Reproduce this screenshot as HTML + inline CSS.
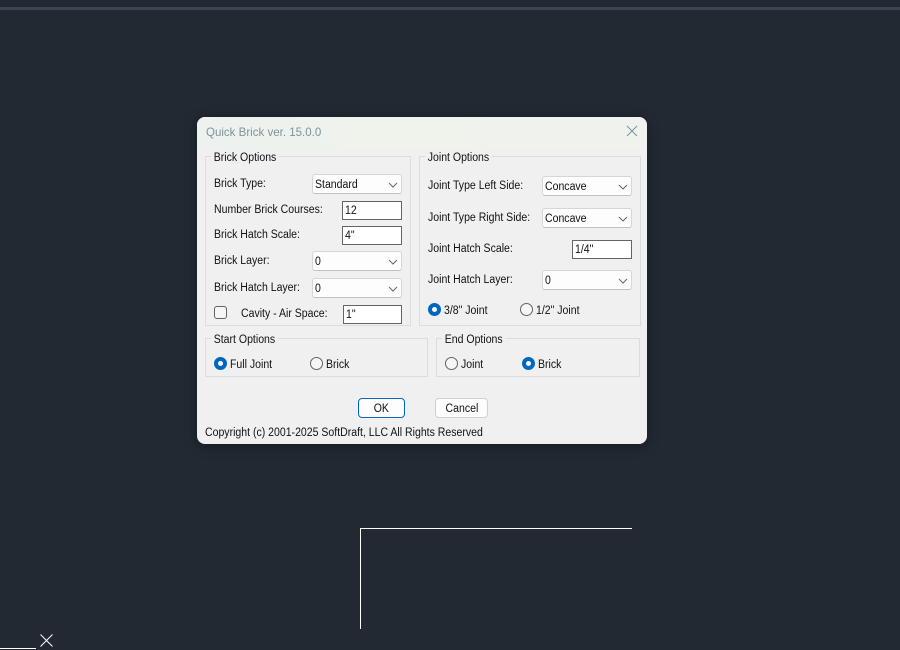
<!DOCTYPE html>
<html><head><meta charset="utf-8"><style>
html,body{margin:0;padding:0;width:900px;height:650px;overflow:hidden;background:#222933}
*{box-sizing:border-box}
body{position:relative;font-family:"Liberation Sans",sans-serif;font-size:12px;color:#111}
.a{position:absolute}
.t{position:absolute;white-space:nowrap;line-height:14px;height:14px;font-size:11.5px;color:#111;margin-top:1px;transform:scaleX(.915);transform-origin:0 0}
.g{position:absolute;border:1px solid #dcdcdc}
.lg{position:absolute;white-space:nowrap;background:#f0f0f0;padding:0 3px;margin-left:0;margin-top:1px;line-height:14px;font-size:11.5px;color:#111;transform:scaleX(.915);transform-origin:0 0}
.c{position:absolute;width:90px;height:20px;background:#fdfdfd;border:1px solid #d6d6d6;border-bottom-color:#c0c0c0;border-radius:3px;font-size:11.5px;line-height:21px;padding-left:2px;color:#111;white-space:nowrap}
.c svg{position:absolute;right:2px;top:4px}
.s{display:inline-block;transform:scaleX(.915);transform-origin:0 50%}
.i{position:absolute;height:19px;background:#fff;border:1px solid #646464;font-size:11.5px;line-height:19px;padding-left:2px;color:#111}
.r{position:absolute;width:13px;height:13px;border-radius:50%;border:1px solid #5f6468;background:#f6f6f6}
.r.on{border:4px solid #0067c0;background:#fff}
.b{position:absolute;height:20px;border-radius:4px;background:#fdfdfd;text-align:center;font-size:11.5px;line-height:20px;color:#111}
.b .s{transform-origin:50% 50%}
</style></head><body>
<div class="a" style="left:0;top:7px;width:900px;height:3px;background:#3c4353"></div>

<div class="a" style="left:360px;top:528px;width:272px;height:1px;background:#fff"></div>
<div class="a" style="left:360px;top:528px;width:1px;height:101px;background:#fff"></div>
<div class="a" style="left:0;top:648px;width:36px;height:1px;background:#fff"></div>
<svg class="a" style="left:40px;top:634px" width="13" height="13"><path d="M0.5 0.5L12.5 12.5M12.5 0.5L0.5 12.5" stroke="#fff" stroke-width="1" fill="none"/></svg>

<div class="a" style="left:197px;top:117px;width:450px;height:327px;background:#f0f0f0;border-radius:8px;box-shadow:0 2px 12px rgba(0,0,0,.35);overflow:hidden">
  <div class="a" style="left:0;top:0;width:450px;height:32px;background:linear-gradient(90deg,#eef2ee,#eff3ec 45%,#f0f2ee)"></div>
</div>
<div class="t" style="left:206px;top:124px;color:#7f929c;font-size:12px;transform:scaleX(.96)">Quick Brick ver. 15.0.0</div>
<svg class="a" style="left:626px;top:125px" width="12" height="12"><path d="M1 1L11 11M11 1L1 11" stroke="#7a93a3" stroke-width="1" fill="none"/></svg>

<div class="g" style="left:205px;top:156px;width:206px;height:170px"></div>
<div class="lg" style="left:211px;top:150px">Brick Options</div>
<div class="g" style="left:419px;top:156px;width:222px;height:170px"></div>
<div class="lg" style="left:425px;top:150px">Joint Options</div>
<div class="g" style="left:205px;top:338px;width:223px;height:39px"></div>
<div class="lg" style="left:211px;top:332px">Start Options</div>
<div class="g" style="left:436px;top:338px;width:204px;height:39px"></div>
<div class="lg" style="left:442px;top:332px">End Options</div>

<div class="t" style="left:214px;top:176px">Brick Type:</div>
<div class="c" style="left:312px;top:174px"><span class="s">Standard</span><svg width="12" height="12"><path d="M2 4L6 8L10 4" stroke="#666" fill="none"/></svg></div>
<div class="t" style="left:214px;top:202px">Number Brick Courses:</div>
<div class="i" style="left:342px;top:201px;width:60px"><span class="s">12</span></div>
<div class="t" style="left:214px;top:227px">Brick Hatch Scale:</div>
<div class="i" style="left:342px;top:226px;width:60px"><span class="s">4"</span></div>
<div class="t" style="left:214px;top:253px">Brick Layer:</div>
<div class="c" style="left:312px;top:251px"><span class="s">0</span><svg width="12" height="12"><path d="M2 4L6 8L10 4" stroke="#666" fill="none"/></svg></div>
<div class="t" style="left:214px;top:280px">Brick Hatch Layer:</div>
<div class="c" style="left:312px;top:278px"><span class="s">0</span><svg width="12" height="12"><path d="M2 4L6 8L10 4" stroke="#666" fill="none"/></svg></div>
<div class="a" style="left:214px;top:306px;width:13px;height:13px;border:1px solid #5f6468;border-radius:3px;background:#f6f6f6"></div>
<div class="t" style="left:241px;top:306px">Cavity - Air Space:</div>
<div class="i" style="left:343px;top:305px;width:59px"><span class="s">1"</span></div>

<div class="t" style="left:428px;top:178px">Joint Type Left Side:</div>
<div class="c" style="left:542px;top:176px"><span class="s">Concave</span><svg width="12" height="12"><path d="M2 4L6 8L10 4" stroke="#666" fill="none"/></svg></div>
<div class="t" style="left:428px;top:210px">Joint Type Right Side:</div>
<div class="c" style="left:542px;top:208px"><span class="s">Concave</span><svg width="12" height="12"><path d="M2 4L6 8L10 4" stroke="#666" fill="none"/></svg></div>
<div class="t" style="left:428px;top:241px">Joint Hatch Scale:</div>
<div class="i" style="left:572px;top:240px;width:60px"><span class="s">1/4"</span></div>
<div class="t" style="left:428px;top:272px">Joint Hatch Layer:</div>
<div class="c" style="left:542px;top:270px"><span class="s">0</span><svg width="12" height="12"><path d="M2 4L6 8L10 4" stroke="#666" fill="none"/></svg></div>
<div class="r on" style="left:428px;top:303px"></div>
<div class="t" style="left:444px;top:303px">3/8" Joint</div>
<div class="r" style="left:520px;top:303px"></div>
<div class="t" style="left:536px;top:303px">1/2" Joint</div>

<div class="r on" style="left:214px;top:357px"></div>
<div class="t" style="left:230px;top:357px">Full Joint</div>
<div class="r" style="left:310px;top:357px"></div>
<div class="t" style="left:326px;top:357px">Brick</div>
<div class="r" style="left:445px;top:357px"></div>
<div class="t" style="left:461px;top:357px">Joint</div>
<div class="r on" style="left:522px;top:357px"></div>
<div class="t" style="left:538px;top:357px">Brick</div>

<div class="b" style="left:358px;top:398px;width:47px;border:1px solid #0067c0"><span class="s">OK</span></div>
<div class="b" style="left:435px;top:398px;width:53px;border:1px solid #d0d0d0"><span class="s">Cancel</span></div>
<div class="t" style="left:205px;top:425px">Copyright (c) 2001-2025 SoftDraft, LLC All Rights Reserved</div>
</body></html>
